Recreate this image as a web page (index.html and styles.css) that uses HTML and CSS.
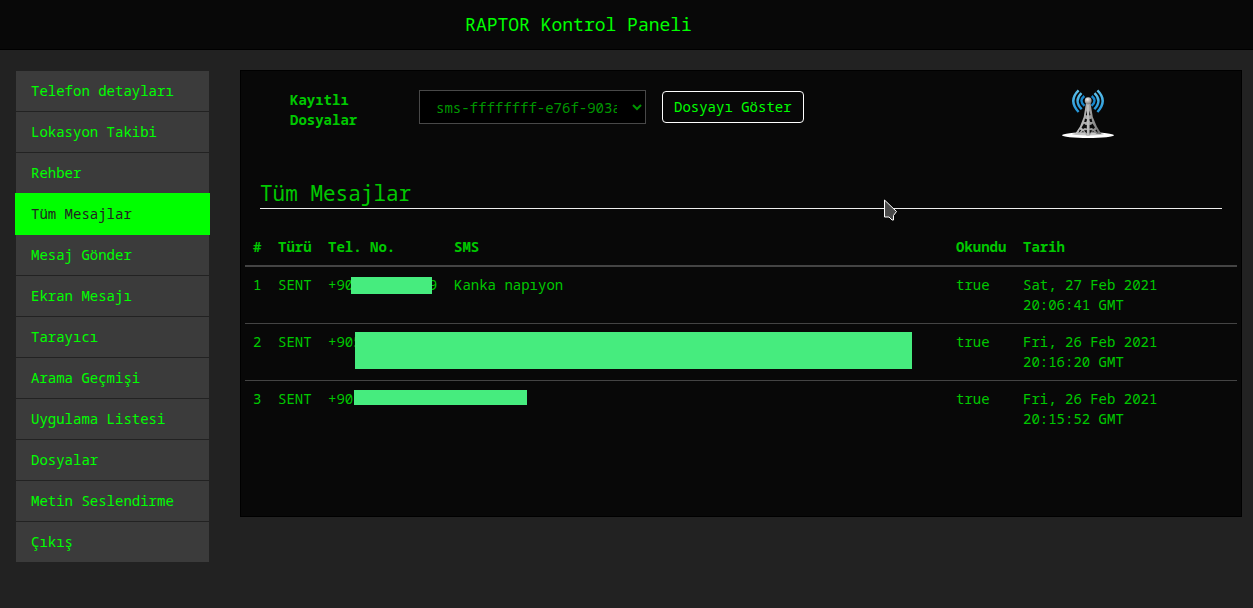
FILE: index.html
```
<!DOCTYPE html>
<html lang="tr">
<head>
<meta charset="utf-8">
<meta name="viewport" content="width=device-width, initial-scale=1">
<title>RAPTOR Kontrol Paneli</title>
<link rel="stylesheet" href="styles.css">
</head>
<body>
<header class="navbar">RAPTOR Kontrol Paneli</header>
<div class="layout">
  <nav class="menu">
    <a class="menu-item" href="#">Telefon detayları</a>
    <a class="menu-item" href="#">Lokasyon Takibi</a>
    <a class="menu-item" href="#">Rehber</a>
    <a class="menu-item active" href="#">Tüm Mesajlar</a>
    <a class="menu-item" href="#">Mesaj Gönder</a>
    <a class="menu-item" href="#">Ekran Mesajı</a>
    <a class="menu-item" href="#">Tarayıcı</a>
    <a class="menu-item" href="#">Arama Geçmişi</a>
    <a class="menu-item" href="#">Uygulama Listesi</a>
    <a class="menu-item" href="#">Dosyalar</a>
    <a class="menu-item" href="#">Metin Seslendirme</a>
    <a class="menu-item" href="#">Çıkış</a>
  </nav>
  <main class="panel">
    <form class="file-form">
      <label class="file-label" for="file">Kayıtlı Dosyalar</label>
      <select class="file-select" id="file">
        <option>sms-ffffffff-e76f-903a-ffff</option>
      </select>
      <button class="file-button" type="button">Dosyayı Göster</button>
      <svg class="tower" viewBox="0 0 54 52" aria-hidden="true">
        <defs>
          <linearGradient id="steel" x1="0" x2="1" y1="0" y2="0">
            <stop offset="0" stop-color="#c4c4c4"/><stop offset=".5" stop-color="#a8a8a8"/><stop offset="1" stop-color="#6c6c6c"/>
          </linearGradient>
          <radialGradient id="ball" cx=".4" cy=".3" r=".7">
            <stop offset="0" stop-color="#eee"/><stop offset="1" stop-color="#808080"/>
          </radialGradient>
          <linearGradient id="wave" x1="0" x2="0" y1="0" y2="1">
            <stop offset="0" stop-color="#5cc0ea"/><stop offset="1" stop-color="#2496da"/>
          </linearGradient>
        </defs>
        <ellipse cx="27" cy="47.200" rx="26" ry="2.800" fill="#fff"/>
        <ellipse cx="27" cy="46" rx="16" ry="1.500" fill="#c4c4c4"/>
        <g fill="none" stroke="url(#wave)" stroke-width="2.400">
          <path stroke="#1787cc" d="M23.300 8Q17.500 12.700 23.500 17.800M30.700 8Q36.500 12.700 30.500 17.800"/>
          <path d="M20.500 5.200Q12.500 12.700 20.700 21.200M33.500 5.200Q41.500 12.700 33.300 21.200"/>
          <path d="M17.600 2.400Q7 12.700 17.600 24M36.400 2.400Q47 12.700 36.400 24"/>
        </g>
        <path fill="url(#steel)" d="M25 15h4.500l2.300 14 4 9.500 4.700 7.500h-5l-3.500-3-3.500 4.500h-3l-3.500-4.500-3.500 3h-4.500l5-7.500 3.700-9.500z"/>
        <path fill="#0b0b0b" d="M26 22.500l-1.200 4.500 1.200.500zM28.300 22.500l1.200 4.500-1.200.500zM24 30.500l2.200 1-1 2.500h-2zM30.500 30.500l-2.200 1 1 2.500h2zM23 35.500l1.300 1.300 1.500.2v3.500l-2-.5-1.800 1-1.500-1.500zM31.500 35.500l-1.300 1.300-1.500.2v3.500l2-.5 1.800 1 1.500-1.500zM18.800 41.500l1.500 1-2.800 2.500zM35.700 41.500l-1.500 1 2.800 2.500zM23 42.500l2.800-.5v3.500zM31.500 42.500l-2.800-.5v3.500z"/>
        <path stroke="#d0d0d0" stroke-width="1" d="M27 17v30"/>
        <circle cx="27.200" cy="12.700" r="3.400" fill="url(#ball)"/>
      </svg>
    </form>
    <h1 class="title">Tüm Mesajlar
      <svg class="pointer" viewBox="0 0 14 22" aria-hidden="true"><path d="M.500 1v17h4.500l3 3h1.500v-4.500l3-4z" fill="#4a4a4a" stroke="#fff"/></svg>
    </h1>
    <table class="messages">
      <colgroup><col class="c-id"><col class="c-type"><col class="c-phone"><col><col class="c-read"><col class="c-date"></colgroup>
      <thead>
        <tr><th>#</th><th>Türü</th><th>Tel. No.</th><th>SMS</th><th>Okundu</th><th>Tarih</th></tr>
      </thead>
      <tbody>
        <tr><td>1</td><td>SENT</td><td class="phone">+90         9<span class="mask mask-number"></span></td><td>Kanka napıyon</td><td>true</td><td>Sat, 27 Feb 2021 20:06:41 GMT</td></tr>
        <tr><td>2</td><td>SENT</td><td class="phone">+905<span class="mask mask-message"></span></td><td></td><td>true</td><td>Fri, 26 Feb 2021 20:16:20 GMT</td></tr>
        <tr><td>3</td><td>SENT</td><td class="phone">+90<span class="mask mask-short"></span></td><td></td><td>true</td><td>Fri, 26 Feb 2021 20:15:52 GMT</td></tr>
      </tbody>
    </table>
  </main>
</div>
</body>
</html>
```
FILE: styles.css
```
* { box-sizing: border-box; }

body {
  margin: 0;
  background: #222;
  color: #00c800;
  font: 14px/20px "Noto Sans Mono", "DejaVu Sans Mono", monospace;
}

.navbar {
  padding: 9px 96px 10px 0;
  background: #080808;
  border-bottom: 1px solid #000;
  color: #0f0;
  font-size: 18px;
  line-height: 30px;
  text-align: center;
}

.layout {
  display: grid;
  grid-template-columns: 195px minmax(0, 1fr);
  gap: 30px;
  align-items: start;
  padding: 20px 11px 20px 15px;
}

.menu { display: flex; flex-direction: column; }

.menu-item {
  margin-bottom: -1px;
  padding: 10px 15px;
  border: 1px solid #222;
  background: #3b3b3b;
  color: #0f0;
  text-decoration: none;
}

.menu-item.active {
  position: relative;
  background: #0f0;
  border-color: #0f0;
  color: #222;
}

.panel {
  padding: 17px 4px 78px;
  background: #080808;
  border: 1px solid #000;
}

.file-form {
  display: flex;
  align-items: flex-start;
  padding: 0 122px 0 45px;
}

.file-label {
  width: 113px;
  margin-right: 16px;
  padding: 2px 30px 0 0;
  font-weight: bold;
}

.file-select {
  width: 227px;
  height: 34px;
  margin: 2px 16px 0 0;
  padding: 6px 12px;
  background: #000;
  border: 1px solid #484848;
  border-radius: 0;
  color: #009600;
  font: inherit;
}

.file-button {
  margin-top: 3px;
  padding: 5px 11px;
  background: #080808;
  border: 1px solid #fff;
  border-radius: 4px;
  color: #0f0;
  font: inherit;
  white-space: nowrap;
}

.tower { width: 54px; height: 52px; margin-left: auto; }

.title {
  position: relative;
  margin: 38px 15px 20px;
  border-bottom: 1px solid #eee;
  font-size: 21px;
  font-weight: normal;
  line-height: 30px;
}

.pointer {
  position: absolute;
  top: 21px;
  left: 624px;
  width: 14px;
  height: 22px;
}

.messages {
  width: 100%;
  table-layout: fixed;
  border-spacing: 0;
}

.c-id { width: 25px; }
.c-type { width: 50px; }
.c-phone { width: 126px; }
.c-read { width: 67px; }
.c-date { width: 222px; }

.messages th,
.messages td {
  padding: 8px;
  border-bottom: 1px solid #444;
  text-align: left;
  vertical-align: top;
}

.messages th { border-bottom-width: 2px; }
.messages tbody tr:last-child td { border-bottom-color: transparent; }

.messages .phone { position: relative; white-space: pre; }

.mask { position: absolute; background: #46ec7e; }
.mask-number { top: 10px; left: 31px; width: 81px; height: 17px; }
.mask-message { top: 8px; left: 35px; width: 557px; height: 37px; }
.mask-short { top: 9px; left: 34px; width: 173px; height: 15px; }
```
